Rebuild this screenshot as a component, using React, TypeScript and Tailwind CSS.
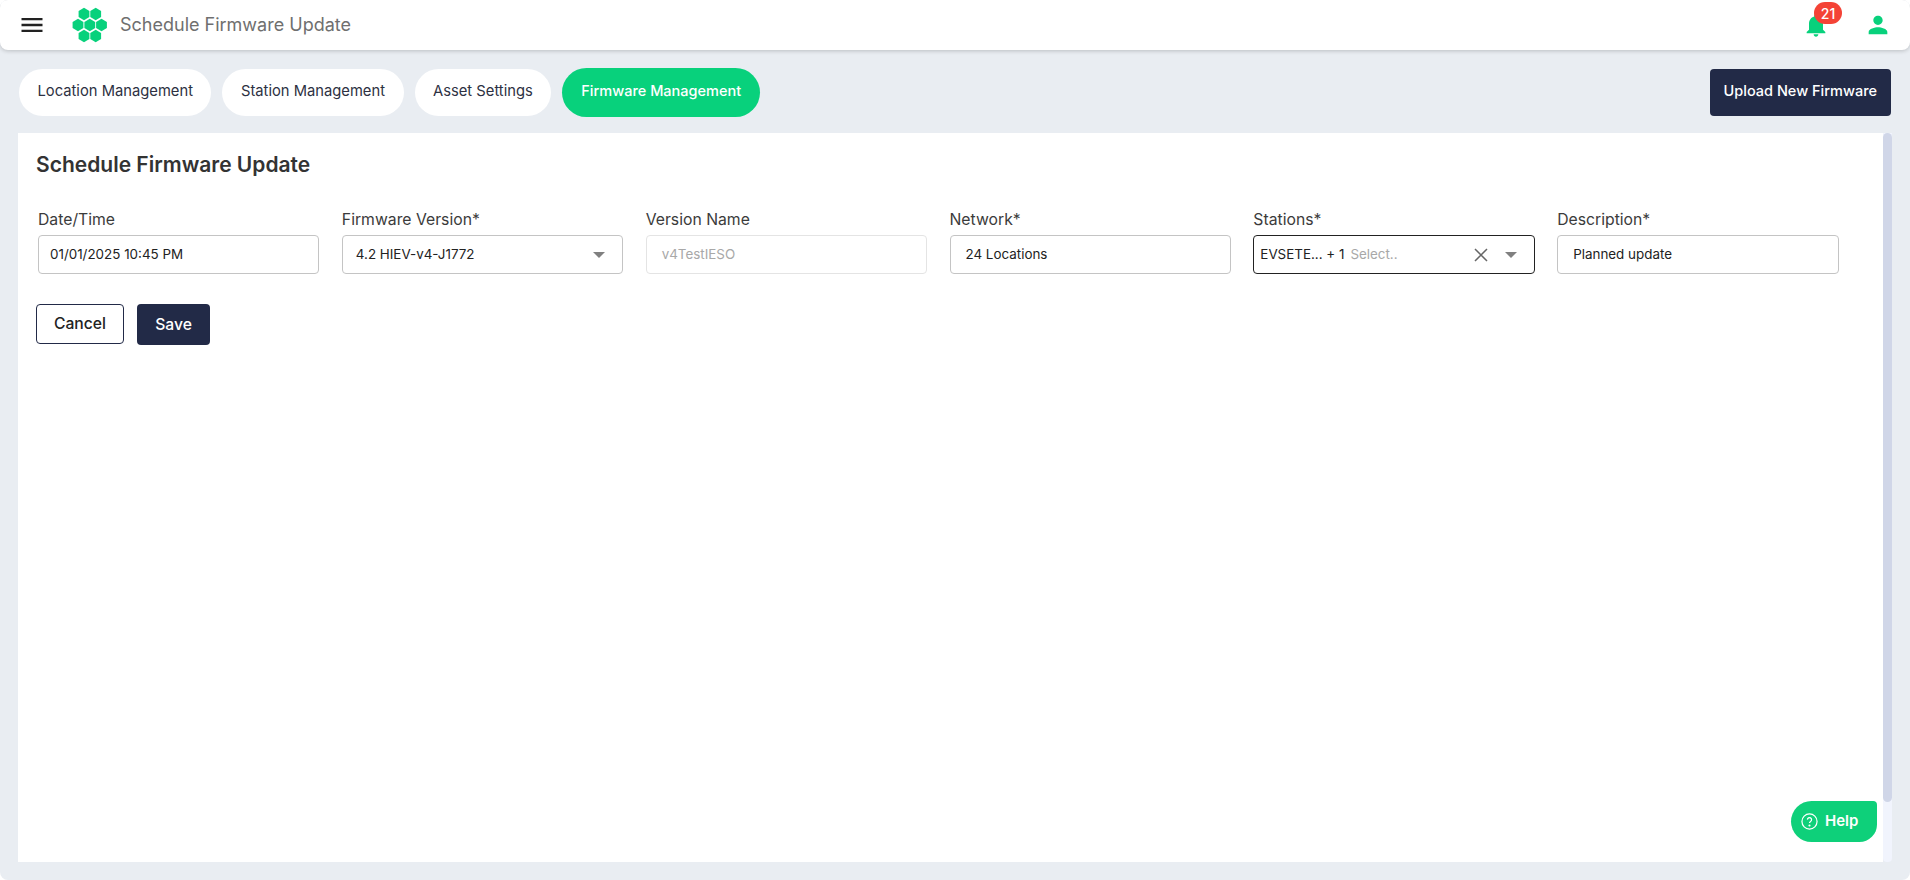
import React from 'react';

const tabs = ['Location Management', 'Station Management', 'Asset Settings'];

const MENU = 'M3 18h18v-2H3v2zm0-5h18v-2H3v2zm0-7v2h18V6H3z';
const BELL = 'M12 22c1.1 0 2-.9 2-2h-4c0 1.1.89 2 2 2zm6-6v-5c0-3.07-1.64-5.64-4.5-6.32V4c0-.83-.67-1.5-1.5-1.5s-1.5.67-1.5 1.5v.68C7.63 5.36 6 7.92 6 11v5l-2 2v1h16v-1l-2-2z';
const PERSON = 'M12 12c2.21 0 4-1.79 4-4s-1.79-4-4-4-4 1.79-4 4 1.79 4 4 4zm0 2c-2.67 0-8 1.34-8 4v2h16v-2c0-2.66-5.33-4-8-4z';

// hexagon centres for the logo, in a 36 x 36 box
const hexes = [
  [12, 7], [23.7, 7],
  [6, 18], [17.8, 18], [29.5, 18],
  [12, 29], [23.7, 29],
];

function Logo() {
  return (
    <svg viewBox="0 0 36 36" className="w-[36px] h-[36px] shrink-0" fill="#08d17c">
      {hexes.map(([x, y]) => (
        <polygon
          key={`${x}-${y}`}
          points={`${x},${y - 6.3} ${x + 5.4},${y - 3.1} ${x + 5.4},${y + 3.1} ${x},${y + 6.3} ${x - 5.4},${y + 3.1} ${x - 5.4},${y - 3.1}`}
        />
      ))}
    </svg>
  );
}

function Caret() {
  return (
    <svg viewBox="0 0 12 6" className="w-[12px] h-[6px] shrink-0" fill="#808080">
      <path d="M0 0h12L6 6z" />
    </svg>
  );
}

function Field({ label, children }: { label: string; children: React.ReactNode }) {
  return (
    <div className="flex flex-col">
      <label className="h-[19px] mb-[6px] text-[15.75px] leading-[19px] text-[#3b3b3b]">{label}</label>
      {children}
    </div>
  );
}

const boxClass = 'h-[39px] flex items-center rounded-[4px] border bg-white text-[13.4px]';

export default function App() {
  return (
    <div className="w-[1910px] h-[880px] overflow-hidden bg-[#e9edf2] rounded-[8px] font-['Inter',sans-serif]">
      {/* Top bar */}
      <header className="h-[50px] flex items-center bg-white rounded-b-[8px] shadow-[0_1px_4px_rgba(0,0,0,0.2)] pl-[18px] pr-[18px]">
        <svg viewBox="0 0 24 24" className="w-[28px] h-[28px] shrink-0" fill="#222">
          <path d={MENU} />
        </svg>
        <div className="ml-[26px]"><Logo /></div>
        <span className="ml-[12px] mb-[2px] text-[18px] text-[#6f6f6f]">Schedule Firmware Update</span>
        <div className="ml-auto relative w-[28px] h-[28px] mr-[34px]">
          <svg viewBox="0 0 24 24" className="w-[28px] h-[28px]" fill="#08d17c">
            <path d={BELL} />
          </svg>
          <span className="absolute left-[12px] top-[-9px] w-[28px] h-[22px] rounded-full bg-[#f44336] text-white text-[14px] font-medium flex items-center justify-center">21</span>
        </div>
        <svg viewBox="0 0 24 24" className="w-[28px] h-[28px]" fill="#08d17c">
          <path d={PERSON} />
        </svg>
      </header>

      {/* Tabs */}
      <div className="mt-[18px] h-[49px] flex items-center gap-[11px] pl-[19px] pr-[19px]">
        {tabs.map((t) => (
          <button key={t} className="h-[47px] px-[18.5px] pb-[2px] rounded-full bg-white text-[#2d3142] text-[14.75px]">
            {t}
          </button>
        ))}
        <button className="h-[49px] px-[19px] pb-[3px] rounded-full bg-[#08d17c] text-white text-[14.5px] font-medium">
          Firmware Management
        </button>
        <button className="ml-auto h-[47px] px-[14px] pb-[3px] rounded-[4px] bg-[#222a47] text-white text-[14.5px] font-medium">
          Upload New Firmware
        </button>
      </div>

      {/* Card */}
      <div className="relative mt-[16px] ml-[18px] w-[1874px] h-[729px] flex">
        <main className="flex-1 bg-white pl-[18px] pt-[20px]">
          <h1 className="text-[21px] leading-[24px] font-semibold text-[#333]">Schedule Firmware Update</h1>
          <div className="mt-[33px] ml-[2px] w-[1800.5px] grid grid-cols-6 gap-[22.5px]">
            <Field label="Date/Time">
              <div className={`${boxClass} border-[#c4c4c4] pl-[11px] text-[#222]`}>01/01/2025 10:45 PM</div>
            </Field>
            <Field label="Firmware Version*">
              <div className={`${boxClass} border-[#c4c4c4] pl-[13px] pr-[17px] justify-between text-[#222]`}>
                <span>4.2 HIEV-v4-J1772</span>
                <Caret />
              </div>
            </Field>
            <Field label="Version Name">
              <div className={`${boxClass} border-[#e4e4e4] pl-[15px] text-[#a8a8a8]`}>v4TestIESO</div>
            </Field>
            <Field label="Network*">
              <div className={`${boxClass} border-[#c4c4c4] pl-[15px] text-[#222]`}>24 Locations</div>
            </Field>
            <Field label="Stations*">
              <div className={`${boxClass} border-[#222] pl-[6px] pr-[17px] text-[#222]`}>
                <span>EVSETE... + 1</span>
                <span className="ml-[6px] text-[#a8a8a8]">Select..</span>
                <svg viewBox="0 0 14 14" className="ml-auto mr-[17px] w-[14px] h-[14px]" stroke="#666" strokeWidth="1.5" fill="none">
                  <path d="M1 1l12 12M13 1L1 13" />
                </svg>
                <Caret />
              </div>
            </Field>
            <Field label="Description*">
              <div className={`${boxClass} border-[#c4c4c4] pl-[15px] text-[#222]`}>Planned update</div>
            </Field>
          </div>
          <div className="mt-[30px] flex gap-[13px]">
            <button className="h-[40px] w-[88px] rounded-[4px] border border-[#222a47] bg-white text-[#222] text-[15.7px] font-medium">Cancel</button>
            <button className="h-[41px] w-[73px] rounded-[4px] bg-[#222a47] text-white text-[15.7px] font-medium">Save</button>
          </div>
        </main>

        {/* Scrollbar */}
        <div className="w-[9px] bg-[#f1f4fd] rounded-b-[4px]">
          <div className="h-[669px] rounded-[5px] bg-[#d0d6e8]" />
        </div>

        {/* Help */}
        <button className="absolute left-[1773px] top-[668px] w-[86px] h-[41px] pl-[10px] flex items-center gap-[7px] bg-[#0ed07a] text-white text-[15px] font-semibold rounded-l-[21px] rounded-tr-[4px] rounded-br-[18px]">
          <svg viewBox="0 0 18 18" className="w-[17px] h-[17px]" fill="none" stroke="white" strokeWidth="1.3">
            <circle cx="9" cy="9" r="8" />
            <path d="M6.8 7a2.2 2.2 0 1 1 3.4 1.9c-.8.5-1.2.9-1.2 1.8" />
            <circle cx="9" cy="13.2" r=".5" fill="white" />
          </svg>
          Help
        </button>
      </div>
    </div>
  );
}
